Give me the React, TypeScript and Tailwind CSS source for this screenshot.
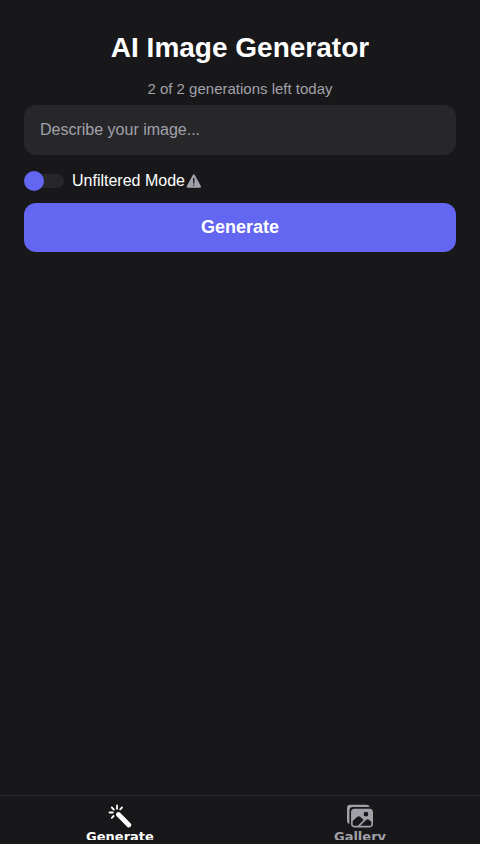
import React, { useState } from "react";
import { IoImages, IoWarning } from "react-icons/io5";

function WandIcon() {
    return (
        <svg width="24" height="24" viewBox="0 0 24 24" fill="none" stroke="white" strokeLinecap="round" className="shrink-0">
            <line x1="10.5" y1="10.5" x2="20.8" y2="21" strokeWidth="4.8" />
            <line x1="9" y1="1.5" x2="9" y2="4.8" strokeWidth="1.8" />
            <line x1="1.5" y1="8.5" x2="4.8" y2="8.5" strokeWidth="1.8" />
            <line x1="3.8" y1="3.5" x2="5.8" y2="5.5" strokeWidth="1.8" />
            <line x1="14" y1="3.5" x2="12.2" y2="5.3" strokeWidth="1.8" />
            <line x1="3.8" y1="13.8" x2="5.6" y2="12" strokeWidth="1.8" />
        </svg>
    );
}

export default function App() {
    const [prompt, setPrompt] = useState("");
    return (
        <div className="h-[844px] overflow-hidden flex flex-col bg-[#18181b] font-['Liberation_Sans',sans-serif]">
            <div className="flex-1 px-6 pt-[31px] flex flex-col">
                <h1 className="text-[28px] leading-[34px] font-bold text-white text-center mb-[15px]">AI Image Generator</h1>
                <p className="text-[15px] leading-[17px] text-[#a1a1aa] text-center mb-2">2 of 2 generations left today</p>
                <input
                    value={prompt}
                    onChange={(e) => setPrompt(e.target.value)}
                    placeholder="Describe your image..."
                    className="h-[50px] w-full rounded-xl bg-[#27272a] px-4 text-base text-white placeholder:text-[#a1a1aa] outline-none"
                />
                <div className="flex items-center mt-4 h-5">
                    <div className="relative w-10 h-[14px] rounded-full bg-[#27272a] mr-2">
                        <div className="absolute left-0 top-[-3px] w-5 h-5 rounded-full bg-[#6366f1]"></div>
                    </div>
                    <span className="text-base text-white">Unfiltered Mode</span>
                    <IoWarning size={18} className="text-[#a1a1aa]" />
                </div>
                <button className="mt-3 h-[49px] w-full rounded-xl bg-[#6366f1] text-white text-lg font-bold pb-[2px]">Generate</button>
            </div>
            <div className="h-[49px] border-t border-[#27272a] bg-[#18181b]">
                <div className="h-[44px] overflow-hidden flex">
                    <div className="flex-1 flex flex-col items-center pt-[8px]">
                        <WandIcon />
                        <span className="shrink-0 text-[13px] leading-[16px] font-bold text-white font-['DejaVu_Sans',sans-serif] mt-[1px]">Generate</span>
                    </div>
                    <div className="flex-1 flex flex-col items-center pt-[8px]">
                        <IoImages size={26} className="shrink-0 text-[#a1a1aa] -mt-[1px]" />
                        <span className="shrink-0 text-[13px] leading-[16px] font-bold text-[#a1a1aa] font-['DejaVu_Sans',sans-serif]">Gallery</span>
                    </div>
                </div>
            </div>
        </div>
    );
}
